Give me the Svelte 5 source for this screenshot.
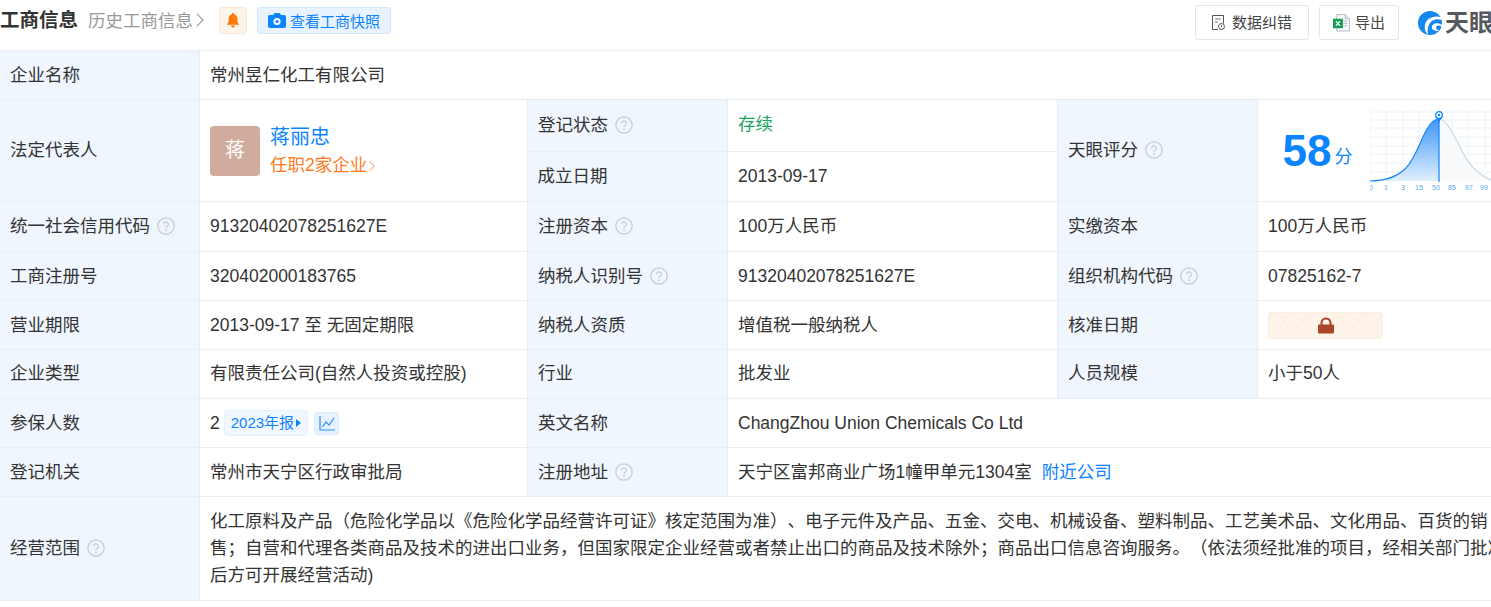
<script>
  const curve = 'M0 71 C15 71 27 67 36 58 C46 47 50 31 57 19 C61 12 65 9 69 9'
  const curveRight = 'M69 9 C76 9 81 20 88 33 C94 46 102 62 121 70'
  const hLines = [2, 10, 18, 27, 36, 44, 53, 62, 70]
  const vLines = [0, 16, 33, 49, 65, 82, 98, 115]
  const ticks = [['0', 1], ['1', 16], ['3', 33], ['15', 49], ['50', 66], ['85', 82], ['97', 99], ['99', 114]]
</script>

{#snippet help()}
  <svg class="help" viewBox="0 0 18 18" aria-hidden="true">
    <circle cx="9" cy="9" r="8.2" />
    <path d="M6.6 7.2a2.4 2.4 0 1 1 3.6 2.1c-.8.5-1.2.9-1.2 1.9" />
    <circle class="dot" cx="9" cy="13.2" r=".9" />
  </svg>
{/snippet}

<div class="page">
  <header>
    <div class="title-group">
      <h2>工商信息</h2>
      <span class="history">历史工商信息<svg class="chev" viewBox="0 0 9 16"><path d="M1 1l7 7-7 7" /></svg></span>
      <span class="bell">
        <svg viewBox="0 0 14 16"><path d="M7 0c.8 0 1.2.5 1.2 1.2C10.600 1.900 11.800 4 11.800 6.500v3.200L13.600 12.400H.4L2.200 9.700V6.500C2.200 4 3.400 1.900 5.800 1.200 5.800.5 6.200 0 7 0zM5 13.400h4C9 14.800 8.100 15.600 7 15.600S5 14.800 5 13.400z" /></svg>
      </span>
      <span class="snapshot">
        <svg viewBox="0 0 18 15">
          <path d="M2 2h3l1.500-2h5L13 2h3a2 2 0 0 1 2 2v9a2 2 0 0 1-2 2H2a2 2 0 0 1-2-2V4a2 2 0 0 1 2-2z" fill="#0a84ff" />
          <circle cx="9" cy="8.500" r="3.600" fill="#fff" />
          <circle cx="9" cy="8.500" r="1.500" fill="#0a84ff" />
        </svg>
        查看工商快照
      </span>
    </div>
    <div class="actions">
      <span class="btn fix">
        <svg viewBox="0 0 13 15" fill="none" stroke="#555" stroke-width="1">
          <path d="M6 14.500H.5V.5h11v8" />
          <path d="M3 4h6M3 7h3" stroke-width=".8" />
          <circle cx="9.500" cy="11.500" r="3" />
          <path d="M9.500 10v1.800" />
        </svg>
        数据纠错
      </span>
      <span class="btn export">
        <svg viewBox="0 0 18 19">
          <path d="M4 .5h9l4.500 4.500v13H4z" fill="#f6f7f8" stroke="#b4bac2" />
          <path d="M13 .5V5h4.500" fill="#e4e7ea" stroke="#b4bac2" />
          <path d="M11 7.500h4M11 10h4M11 12.500h4" stroke="#b4bac2" />
          <rect x="0" y="5" width="10.500" height="10" fill="#169b57" />
          <path d="M3 7.500l4.500 5M7.500 7.500l-4.500 5" stroke="#fff" stroke-width="1.300" />
        </svg>
        导出
      </span>
      <span class="logo">
        <svg viewBox="0 0 24 24">
          <circle cx="12" cy="12" r="12" fill="#1587f0" />
          <path d="M23 6C16 4 9 7 7 13c-1 4 0 8 3 11 -1-6 0-11 4-14 3-2 6-2 10-1z" fill="#fff" />
          <path d="M24 14c-4-3-9-2-10 1-1 3 2 5 7 5-3-2-4-4-2-5 2-1 4 0 5 1z" fill="#fff" />
        </svg>
        <b>天眼查</b>
      </span>
    </div>
  </header>

  <table>
    <colgroup>
      <col class="c-first" /><col class="c-a" /><col class="c-label" /><col class="c-b" /><col class="c-label" /><col class="c-c" />
    </colgroup>
    <tbody>
      <tr class="r49">
        <th>企业名称</th>
        <td colspan="5">常州昱仁化工有限公司</td>
      </tr>
      <tr class="r52">
        <th rowspan="2">法定代表人</th>
        <td rowspan="2">
          <div class="person">
            <span class="avatar">蒋</span>
            <div class="who">
              <a class="name" href="#top">蒋丽忠</a>
              <a class="jobs" href="#top">任职2家企业<svg class="chev small" viewBox="0 0 9 16"><path d="M1 1l7 7-7 7" /></svg></a>
            </div>
          </div>
        </td>
        <th>登记状态 {@render help()}</th>
        <td class="status">存续</td>
        <th rowspan="2">天眼评分 {@render help()}</th>
        <td rowspan="2" class="score-cell">
          <div class="score">
            <span class="num">58</span><span class="unit">分</span>
            <svg class="bell-chart" viewBox="0 0 121 82">
              <defs>
                <linearGradient id="fillBlue" x1="0" y1="0" x2="0" y2="1">
                  <stop offset="0" stop-color="#3d97f6" />
                  <stop offset="1" stop-color="#e0effe" />
                </linearGradient>
              </defs>
              {#each hLines as y}<path class="grid" d="M0 {y}H121" />{/each}
              {#each vLines as x}<path class="grid" d="M{x} 0V71" />{/each}
              <path d="{curveRight} V71 H69 Z" fill="#f8fafc" />
              <path d="{curve} V71 H0 Z" fill="url(#fillBlue)" />
              <path d={curveRight} fill="none" stroke="#c7d8e8" stroke-width="1.200" />
              <path d={curve} fill="none" stroke="#1d87f2" stroke-width="1.200" />
              <path d="M69 9V72" stroke="#0a84ff" stroke-width="1.200" />
              <path d="M65.500 7 69 12l3.500-5z" fill="#0a84ff" />
              <circle cx="69" cy="5" r="3.300" fill="#fff" stroke="#0a84ff" stroke-width="1.300" />
              <circle cx="69" cy="5" r="1.200" fill="#0a84ff" />
              {#each ticks as [label, x]}
                <text {x} y="80" text-anchor="middle">{label}</text>
              {/each}
            </svg>
          </div>
        </td>
      </tr>
      <tr class="r50">
        <th>成立日期</th>
        <td>2013-09-17</td>
      </tr>
      <tr class="r50">
        <th>统一社会信用代码 {@render help()}</th>
        <td>91320402078251627E</td>
        <th>注册资本 {@render help()}</th>
        <td>100万人民币</td>
        <th>实缴资本</th>
        <td>100万人民币</td>
      </tr>
      <tr class="r49">
        <th>工商注册号</th>
        <td>320402000183765</td>
        <th>纳税人识别号 {@render help()}</th>
        <td>91320402078251627E</td>
        <th>组织机构代码 {@render help()}</th>
        <td>07825162-7</td>
      </tr>
      <tr class="r49">
        <th>营业期限</th>
        <td>2013-09-17 至 无固定期限</td>
        <th>纳税人资质</th>
        <td>增值税一般纳税人</td>
        <th>核准日期</th>
        <td>
          <span class="locked">
            <svg viewBox="0 0 16 17"><path d="M3.500 9V6a4.500 4.500 0 0 1 9 0v3" fill="none" stroke="#a8452a" stroke-width="2" /><rect y="7.500" width="16" height="9" rx="1" fill="#a8452a" /></svg>
          </span>
        </td>
      </tr>
      <tr class="r49 lifted">
        <th>企业类型</th>
        <td>有限责任公司(自然人投资或控股)</td>
        <th>行业</th>
        <td>批发业</td>
        <th>人员规模</th>
        <td>小于50人</td>
      </tr>
      <tr class="r49">
        <th>参保人数</th>
        <td>
          <div class="insured">
            <span>2</span>
            <span class="report">2023年报<i></i></span>
            <span class="trend">
              <svg viewBox="0 0 16 15" fill="none" stroke="#2f8ff0" stroke-width="1.200"><path d="M1 0v14h15" /><path d="M3.500 11l3.500-5 3 3 5-7" /></svg>
            </span>
          </div>
        </td>
        <th>英文名称</th>
        <td colspan="3">ChangZhou Union Chemicals Co Ltd</td>
      </tr>
      <tr class="r49">
        <th>登记机关</th>
        <td>常州市天宁区行政审批局</td>
        <th>注册地址 {@render help()}</th>
        <td colspan="3">天宁区富邦商业广场1幢甲单元1304室<a class="near" href="#top">附近公司</a></td>
      </tr>
      <tr class="r104">
        <th>经营范围 {@render help()}</th>
        <td colspan="5" class="scope">化工原料及产品（危险化学品以《危险化学品经营许可证》核定范围为准）、电子元件及产品、五金、交电、机械设备、塑料制品、工艺美术品、文化用品、百货的销售；自营和代理各类商品及技术的进出口业务，但国家限定企业经营或者禁止出口的商品及技术除外；商品出口信息咨询服务。（依法须经批准的项目，经相关部门批准后方可开展经营活动)</td>
      </tr>
    </tbody>
  </table>
</div>

<style>
  :global(body) {
    margin: 0;
    background: #fff;
    overflow: hidden;
  }
  .page {
    width: 1528px;
    font-family: "Liberation Sans", "Noto Sans CJK SC", sans-serif;
    font-size: 17.5px;
    color: #333;
  }
  header {
    display: flex;
    align-items: center;
    height: 50px;
    padding: 0 11px 5px 0;
    box-sizing: border-box;
  }
  .title-group {
    display: flex;
    align-items: center;
    margin-bottom: 4px;
  }
  h2 {
    margin: 0 0 2px;
    font-size: 19.500px;
    line-height: 40px;
    font-weight: 700;
    color: #333;
  }
  .history {
    display: flex;
    align-items: center;
    margin-left: 10px;
    padding-bottom: 2px;
    color: #999;
  }
  .chev {
    width: 8px;
    height: 14px;
    margin-left: 3px;
    fill: none;
    stroke: currentColor;
    stroke-width: 1.300;
  }
  .chev.small {
    width: 6px;
    height: 12px;
    margin-left: 2px;
  }
  .bell {
    display: flex;
    align-items: center;
    justify-content: center;
    box-sizing: border-box;
    width: 28px;
    height: 27px;
    margin-left: 15px;
    background: #fff4e9;
    border: 1px solid #fde6d2;
    border-radius: 3px;
  }
  .bell svg {
    width: 14px;
    height: 15px;
    fill: #ff7a0d;
  }
  .snapshot {
    display: flex;
    align-items: center;
    gap: 4px;
    box-sizing: border-box;
    height: 27px;
    margin-left: 10px;
    padding: 0 10px;
    font-size: 15px;
    color: #0a84ff;
    background: #e8f3ff;
    border: 1px solid #d3e7fc;
    border-radius: 3px;
  }
  .snapshot svg {
    width: 18px;
    height: 15px;
  }
  .actions {
    display: flex;
    align-items: center;
    margin-left: auto;
  }
  .btn {
    display: flex;
    align-items: center;
    justify-content: center;
    box-sizing: border-box;
    height: 35px;
    margin-right: 10px;
    padding-bottom: 2px;
    font-size: 15px;
    color: #444;
    border: 1px solid #e3e5e8;
    border-radius: 3px;
  }
  .btn svg {
    position: relative;
    top: 1px;
  }
  .fix {
    width: 114px;
    gap: 7px;
  }
  .fix svg {
    width: 13px;
    height: 15px;
  }
  .export {
    width: 80px;
    gap: 5px;
  }
  .export svg {
    width: 17px;
    height: 18px;
  }
  .logo {
    display: flex;
    align-items: center;
    gap: 3px;
    margin-left: 9px;
    color: #55585d;
  }
  .logo svg {
    width: 24px;
    height: 24px;
  }
  .logo b {
    font-size: 24px;
    line-height: 28px;
    white-space: nowrap;
  }
  table {
    table-layout: fixed;
    border-collapse: collapse;
    width: 1528px;
    line-height: 27px;
  }
  .c-first { width: 199px; }
  .c-label { width: 200px; }
  .c-a { width: 328px; }
  .c-b { width: 330px; }
  .c-c { width: 271px; }
  th, td {
    box-sizing: border-box;
    padding: 0 10px 0 10.500px;
    border: 1px solid #e6edf4;
    text-align: left;
    font-weight: 400;
    color: #333;
  }
  th {
    background: #eff6fd;
    white-space: nowrap;
  }
  th:first-child {
    border-left: 0;
    padding-left: 10px;
  }
  .lifted th, .lifted td {
    padding-bottom: 2px;
  }
  .scope {
    text-spacing-trim: space-all;
  }
  .r49 { height: 49px; }
  .r50 { height: 50px; }
  .r52 { height: 52px; }
  .r104 { height: 104px; }
  .help {
    width: 18px;
    height: 18px;
    margin-left: 2px;
    vertical-align: -3px;
    fill: none;
    stroke: #c2ccd4;
    stroke-width: 1.200;
  }
  .help .dot {
    fill: #c2ccd4;
    stroke: none;
  }
  a {
    color: #0a84ff;
    text-decoration: none;
  }
  .person {
    display: flex;
    align-items: center;
    gap: 10px;
  }
  .avatar {
    display: flex;
    align-items: center;
    justify-content: center;
    width: 50px;
    height: 50px;
    font-size: 20px;
    color: #fff;
    background: #d1ab9b;
    border-radius: 4px;
  }
  .who {
    display: flex;
    flex-direction: column;
    gap: 1px;
  }
  .name {
    font-size: 20px;
    line-height: 28px;
    padding-top: 1px;
  }
  .jobs {
    display: flex;
    align-items: center;
    color: #ff7a1a;
    line-height: 27px;
  }
  .status {
    color: #1aa45f;
    padding-bottom: 3px;
  }
  .score-cell {
    padding: 0;
    overflow: hidden;
  }
  .score {
    display: flex;
    align-items: center;
    height: 100px;
    padding-left: 25px;
    color: #0a84ff;
  }
  .num {
    font-size: 44px;
    font-weight: 700;
    line-height: 50px;
  }
  .unit {
    margin: 14px 0 0 3px;
    font-size: 18px;
  }
  .bell-chart {
    flex: none;
    width: 121px;
    height: 82px;
    margin-left: 18px;
  }
  .grid {
    stroke: #eef4fa;
    stroke-width: 1;
    fill: none;
  }
  .bell-chart text {
    font-size: 7px;
    fill: #5aa7f2;
  }
  .locked {
    display: flex;
    align-items: center;
    justify-content: center;
    box-sizing: border-box;
    width: 115px;
    height: 27px;
    border: 1px solid #fbeee1;
    border-radius: 3px;
    background: repeating-linear-gradient(-55deg, #fdf3e8 0 14px, #f9ebde 14px 15px);
  }
  .locked svg {
    width: 16px;
    height: 17px;
  }
  .insured {
    display: flex;
    align-items: center;
  }
  .report {
    display: flex;
    align-items: center;
    box-sizing: border-box;
    height: 26px;
    margin-left: 4px;
    padding: 0 6px 2px;
    font-size: 15px;
    color: #0a84ff;
    background: #f2f8ff;
    border: 1px solid #e5f1fd;
    border-radius: 3px;
  }
  .report i {
    width: 0;
    height: 0;
    margin: 2px 0 0 2px;
    border-left: 5px solid #0a84ff;
    border-top: 4px solid transparent;
    border-bottom: 4px solid transparent;
  }
  .trend {
    display: flex;
    align-items: center;
    justify-content: center;
    box-sizing: border-box;
    width: 25px;
    height: 23px;
    margin-left: 6px;
    background: #e6f2ff;
    border: 1px solid #d9eafc;
    border-radius: 3px;
  }
  .trend svg {
    width: 16px;
    height: 15px;
  }
  .near {
    margin-left: 10px;
  }
</style>
